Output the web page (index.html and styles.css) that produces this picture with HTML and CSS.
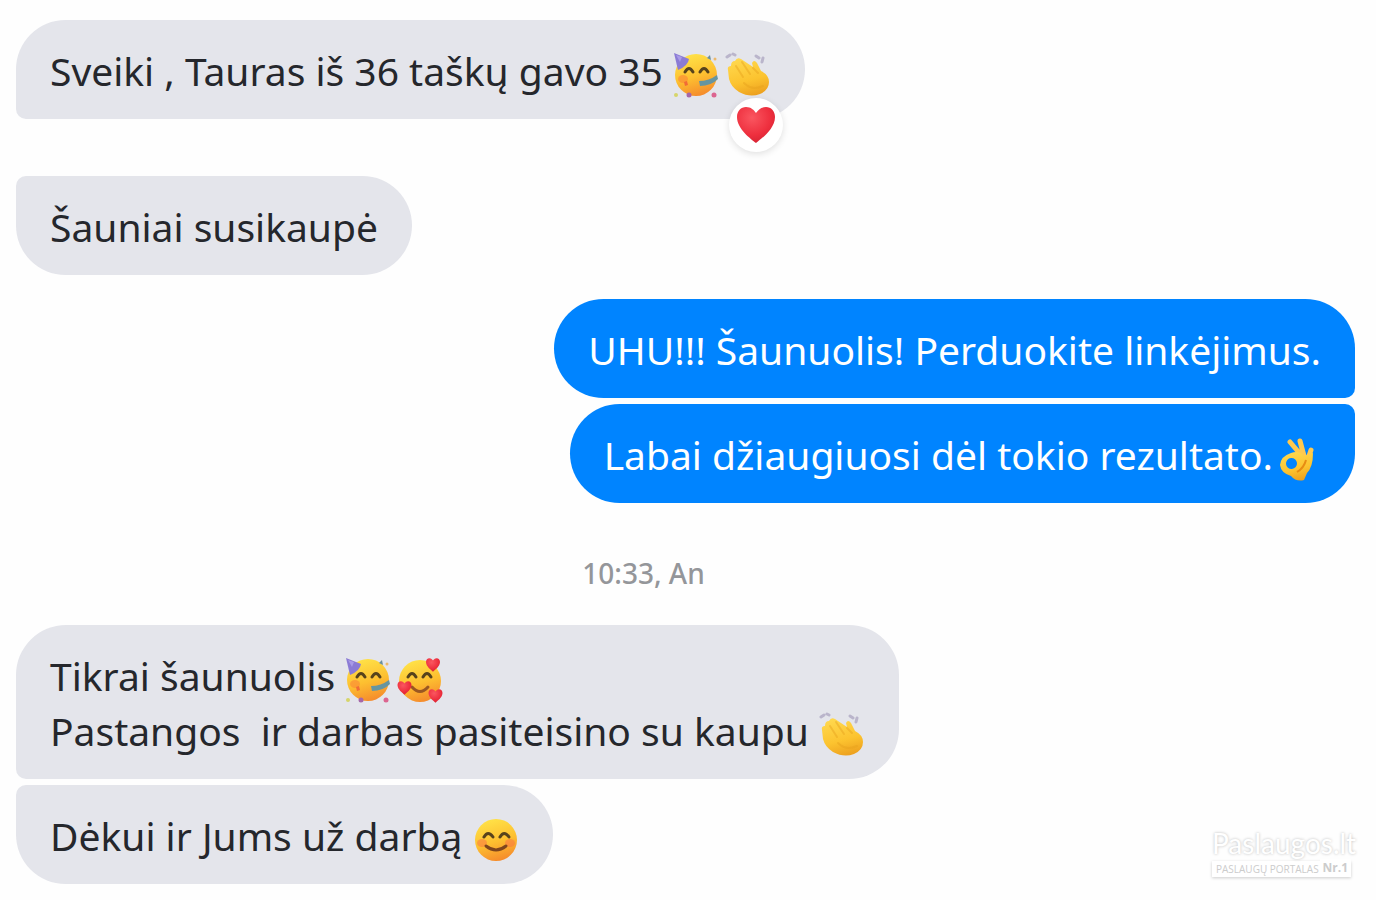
FILE: index.html
```html
<!DOCTYPE html>
<html lang="lt">
<head>
<meta charset="utf-8">
<meta name="viewport" content="width=device-width, initial-scale=1">
<title>Pokalbis</title>
<link rel="stylesheet" href="styles.css">
</head>
<body>
<svg class="defs" aria-hidden="true">
  <defs>
    <linearGradient id="skin" x1="0.3" y1="0" x2="0.6" y2="1">
      <stop offset="0" stop-color="#ffe348"/><stop offset="0.55" stop-color="#fdbf30"/><stop offset="1" stop-color="#f58a2c"/>
    </linearGradient>
    <linearGradient id="hand" x1="0.3" y1="0" x2="0.6" y2="1">
      <stop offset="0" stop-color="#ffd84e"/><stop offset="0.6" stop-color="#fcc32f"/><stop offset="1" stop-color="#eda11f"/>
    </linearGradient>
    <radialGradient id="red" cx="0.4" cy="0.3" r="0.8">
      <stop offset="0" stop-color="#fa5660"/><stop offset="0.6" stop-color="#ee2f3e"/><stop offset="1" stop-color="#cf2030"/>
    </radialGradient>
    <symbol id="heart" viewBox="0 0 40 38">
      <path fill="url(#red)" d="M20 37C15 33 1 23 1 11C1 5 5 1 10 1C15 1 18 4 20 7C22 4 25 1 30 1C35 1 39 5 39 11C39 23 25 33 20 37Z"/>
    </symbol>
    <symbol id="party" viewBox="0 0 46 46">
      <circle cx="23" cy="23" r="21" fill="url(#skin)"/>
      <path d="M1 1L16 7Q15 14 5 18Z" fill="#8b7bd5"/>
      <path d="M3 3L9 5L7 10Z" fill="#a99be8"/>
      <path d="M12 20Q16 13 20 20M27 20Q31 13 35 20" fill="none" stroke="#57431c" stroke-width="3" stroke-linecap="round"/>
      <ellipse cx="10" cy="27" rx="5" ry="4" fill="#fb8a35" opacity=".65"/>
      <path d="M26 29Q36 29 44 23L45 27Q38 34 27 34Z" fill="#6795a0"/>
      <path d="M34 6L37 3L38 8Z" fill="#6a8f9d"/>
      <path d="M11 30L14 29L15 33L12 34Z" fill="#f16b37"/>
      <circle cx="3" cy="43" r="2" fill="#d6d56a"/><circle cx="16" cy="43" r="2.500" fill="#a567a8"/>
      <circle cx="41" cy="43" r="2.500" fill="#dc6590"/><circle cx="42" cy="7" r="1.500" fill="#ecb86b"/>
    </symbol>
    <symbol id="clap" viewBox="0 0 46 46">
      <path d="M2 5L5 3M8 2L10 3M31 4L34 6M38 6L37 10" fill="none" stroke="#bab5cb" stroke-width="3" stroke-linecap="round"/>
      <path fill="url(#hand)" d="M3 18Q2 14 6 14Q6 9 10 9Q12 5 16 7L28 15L27 11Q29 7 32 11L36 19Q44 23 44 30Q44 38 35 42Q25 46 14 40Q6 35 4 27Z"/>
      <path d="M11 14L18 25M17 10L25 22M28 16L33 21M19 31Q27 39 38 34" fill="none" stroke="#e6a11d" stroke-width="2" stroke-linecap="round" opacity=".45"/>
    </symbol>
    <symbol id="love" viewBox="0 0 46 46">
      <circle cx="23" cy="24" r="21" fill="url(#skin)"/>
      <path d="M11 20Q15 13 19 20M26 20Q30 13 34 20" fill="none" stroke="#57431c" stroke-width="3" stroke-linecap="round"/>
      <path d="M15 30Q23 39 31 30" fill="none" stroke="#9a5722" stroke-width="3" stroke-linecap="round"/>
      <use href="#heart" x="28" y="1" width="16" height="14"/>
      <use href="#heart" x="0" y="24" width="15" height="14"/>
      <use href="#heart" x="31" y="32" width="15" height="14"/>
    </symbol>
    <symbol id="smile" viewBox="0 0 46 46">
      <circle cx="23" cy="23" r="21" fill="url(#skin)"/>
      <ellipse cx="9" cy="26" rx="5" ry="4" fill="#f96f45" opacity=".5"/><ellipse cx="37" cy="26" rx="5" ry="4" fill="#f96f45" opacity=".5"/>
      <path d="M11 20Q15 13 20 20M27 20Q31 13 36 20" fill="none" stroke="#57431c" stroke-width="3" stroke-linecap="round"/>
      <path d="M13 29Q23 37 33 29" fill="none" stroke="#7e451d" stroke-width="3" stroke-linecap="round"/>
    </symbol>
    <symbol id="ok" viewBox="0 0 36 44">
      <path d="M11 4L22 17M21 3L25 18M32 12L28 24" fill="none" stroke="#ffc94f" stroke-width="5" stroke-linecap="round"/>
      <path fill="url(#hand)" fill-rule="evenodd" d="M12 15Q20 12 25 18L34 15Q34 29 28 35L25 42Q17 44 12 38Q2 35 1 27Q2 18 12 15ZM12 20A5.500 5.500 0 1 0 13 31A5.500 5.500 0 1 0 12 20Z"/>
      <path d="M18 34Q25 30 27 22" fill="none" stroke="#e78c13" stroke-width="2"/>
    </symbol>
  </defs>
</svg>
<main class="chat">
  <div class="message in top">Sveiki , Tauras iš 36 taškų gavo 35 <svg class="emoji" role="img" aria-label="Šventė"><use href="#party"/></svg><svg class="emoji next" role="img" aria-label="Plojimai"><use href="#clap"/></svg>
    <span class="reaction"><svg class="heart" role="img" aria-label="Širdelė"><use href="#heart"/></svg></span>
  </div>
  <div class="message in bottom after-reaction">Šauniai susikaupė</div>
  <div class="message out top turn">UHU!!! Šaunuolis! Perduokite linkėjimus.</div>
  <div class="message out bottom">Labai džiaugiuosi dėl tokio rezultato.<svg class="emoji ok" role="img" aria-label="Puiku"><use href="#ok"/></svg></div>
  <time class="time">10:33, An</time>
  <div class="message in top">Tikrai šaunuolis <svg class="emoji" role="img" aria-label="Šventė"><use href="#party"/></svg><svg class="emoji next" role="img" aria-label="Meilė"><use href="#love"/></svg><br>Pastangos&nbsp; ir darbas pasiteisino su kaupu <svg class="emoji" role="img" aria-label="Plojimai"><use href="#clap"/></svg></div>
  <div class="message in bottom">Dėkui ir Jums už darbą <svg class="emoji" role="img" aria-label="Šypsena"><use href="#smile"/></svg></div>
</main>
<footer class="brand">
  <div class="brand-name">Paslaugos.lt</div>
  <div class="brand-line"><span>PASLAUGŲ PORTALAS</span><b>Nr.1</b></div>
</footer>
</body>
</html>
```
FILE: styles.css
```css
* { box-sizing: border-box; }
body {
  margin: 0;
  background: #fefefe;
  color: #25272c;
  font-family: "Noto Sans", "Open Sans", sans-serif;
}
.defs { position: absolute; width: 0; height: 0; }
.chat {
  display: flex;
  flex-direction: column;
  align-items: flex-start;
  gap: 6px;
  padding: 20px 21px 15px 16px;
}
.message {
  position: relative;
  padding: 23px 34px 21px;
  border-radius: 50px;
  font-size: 39px;
  line-height: 55px;
}
.in { background: #e4e5eb; }
.out { background: #0084ff; color: #fff; align-self: flex-end; }
.in.top { border-bottom-left-radius: 10px; }
.in.bottom { border-top-left-radius: 10px; }
.out.top { border-bottom-right-radius: 10px; }
.out.bottom { border-top-right-radius: 10px; }
.after-reaction { margin-top: 51px; }
.turn { margin-top: 18px; }
.emoji {
  width: 46px;
  height: 46px;
  margin: 0;
  vertical-align: -12px;
}
.emoji.next { margin-left: 6px; }
.emoji.ok { width: 36px; height: 44px; margin: 0 6px; }
.reaction {
  position: absolute;
  right: 22px;
  bottom: -33px;
  display: grid;
  place-items: center;
  width: 54px;
  height: 54px;
  border-radius: 50%;
  background: #fff;
  box-shadow: 0 2px 7px rgba(0, 0, 0, 0.12);
}
.heart { width: 40px; height: 38px; }
.time {
  align-self: center;
  margin: 46px 84px 28px 0;
  font-size: 28px;
  font-weight: 500;
  line-height: 36px;
  color: #94969a;
}
.brand {
  position: absolute;
  right: 25px;
  bottom: 23px;
  width: 139px;
  color: #fff;
  text-shadow: 0 0 3px #bbb;
}
.brand-name {
  font-family: Lato, sans-serif;
  font-size: 28px;
  line-height: 36px;
  white-space: nowrap;
}
.brand-line {
  display: flex;
  align-items: flex-end;
  justify-content: space-between;
  height: 16px;
  padding-left: 4px;
  background: #fff;
  box-shadow: 0 1px 3px #ccc;
  color: #ccc;
  font-family: "Open Sans", sans-serif;
  font-size: 10px;
  line-height: 16px;
  text-shadow: none;
  white-space: nowrap;
}
.brand-line b {
  padding: 0 3px;
  background: #fff;
  font-size: 12px;
  line-height: 18px;
}
```
